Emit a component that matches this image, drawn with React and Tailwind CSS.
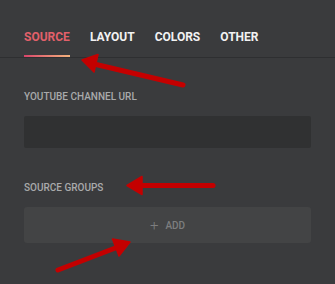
export default function App() {
  const tabs = ["SOURCE", "LAYOUT", "COLORS", "OTHER"];
  return (
    <div
      className="relative w-[335px] h-[284px] overflow-hidden bg-[#3a3b3d]"
      style={{ fontFamily: "Roboto, 'Liberation Sans', sans-serif" }}
    >
      <div className="flex gap-5 px-6 pt-[30px] border-b border-[#2e2f31]">
        {tabs.map((t, i) => (
          <div key={t} className="flex flex-col">
            <span
              className={
                "text-[12px] leading-[15px] font-bold " +
                (i === 0 ? "text-[#e2606a]" : "text-[#f2f2f2]")
              }
            >
              {t}
            </span>
            <div
              className={
                "mt-[10px] h-[2px] " +
                (i === 0
                  ? "bg-gradient-to-r from-[#d8436a] to-[#f2b27c]"
                  : "bg-transparent")
              }
            />
          </div>
        ))}
      </div>

      <div className="flex flex-col px-6">
        <div className="mt-[32px] text-[10px] leading-[13px] font-medium text-[#a9aaab]">
          YOUTUBE CHANNEL URL
        </div>
        <div className="mt-[13px] h-[32px] bg-[#303132] rounded-[2px]" />
        <div className="mt-[33px] text-[10px] leading-[13px] font-medium text-[#a9aaab]">
          SOURCE GROUPS
        </div>
        <div className="mt-[13px] h-[36px] pt-[1px] bg-[#434445] rounded-[3px] flex items-center justify-center gap-[7px] text-[#7d7e7f]">
          <span className="text-[15px] leading-[15px] font-light">+</span>
          <span className="text-[10px] leading-[12px] font-medium">ADD</span>
        </div>
      </div>

      <svg
        className="absolute inset-0 pointer-events-none"
        width="335"
        height="284"
        viewBox="0 0 335 284"
      >
        <defs>
          <filter id="soft" x="-10%" y="-10%" width="120%" height="120%">
            <feGaussianBlur stdDeviation="0.6" />
          </filter>
        </defs>
        <g filter="url(#soft)" fill="#c40000" stroke="#c40000" strokeLinecap="round">
          <line x1="183" y1="85" x2="94" y2="64" strokeWidth="5" />
          <polygon points="82,60 98,54.5 94,72" strokeWidth="1.5" strokeLinejoin="round" />

          <line x1="213" y1="185.5" x2="140" y2="185.5" strokeWidth="5" />
          <polygon points="127,185.5 142,176.5 142,194.5" strokeWidth="1.5" strokeLinejoin="round" />

          <line x1="58" y1="270" x2="118" y2="247" strokeWidth="5" />
          <polygon points="130,242 112.5,239 119,256" strokeWidth="1.5" strokeLinejoin="round" />
        </g>
      </svg>
    </div>
  );
}
